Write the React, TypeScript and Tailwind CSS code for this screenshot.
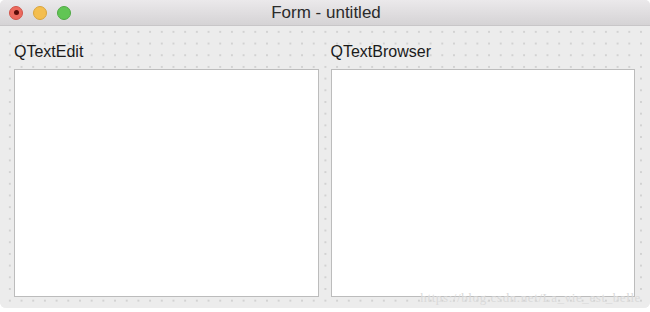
import React from 'react';

const TrafficLight = ({ color, border, dot }: { color: string; border: string; dot?: boolean }) => (
    <div className={`w-[14px] h-[14px] rounded-full border flex items-center justify-center ${color} ${border}`}>
        {dot && <div className="w-[5px] h-[5px] rounded-full bg-[#5a0d0a]" />}
    </div>
);

const Panel = ({ label }: { label: string }) => (
    <div className="flex flex-col flex-1">
        <div className="h-[43px] flex items-center text-[16px] text-[#1a1a1a] leading-none pt-[9px]">{label}</div>
        <div className="h-[228px] bg-white border border-[#bcbcbc]" />
    </div>
);

export default function App() {
    return (
        <div className="w-[650px] h-[312px] bg-white font-['Helvetica','Liberation_Sans',sans-serif]">
            <div className="w-[650px] h-[308px] rounded-b-[6px] rounded-t-[5px] overflow-hidden flex flex-col bg-[#ececec]">
                {/* title bar */}
                <div className="relative h-[26px] flex items-center bg-gradient-to-b from-[#ebe9eb] to-[#d5d3d5] border-b border-[#c8c6c8]">
                    <div className="flex items-center gap-[10px] pl-[9px]">
                        <TrafficLight color="bg-[#ec6a5e]" border="border-[#d2544a]" dot />
                        <TrafficLight color="bg-[#f4be4f]" border="border-[#d9a43c]" />
                        <TrafficLight color="bg-[#61c554]" border="border-[#4fa944]" />
                    </div>
                    <div className="absolute inset-0 flex items-center justify-center text-[17px] text-[#2b2b2b] pointer-events-none pl-[2px]">
                        Form - untitled
                    </div>
                </div>
                {/* form canvas */}
                <div className="relative flex-1 bg-[#ececec] bg-[radial-gradient(circle,#d2d2d2_0.7px,transparent_1.1px)] bg-[size:11.7px_11.7px] bg-[position:4px_0px]">
                    <div className="flex gap-[12px] px-[14px] pr-[15px]">
                        <Panel label="QTextEdit" />
                        <Panel label="QTextBrowser" />
                    </div>
                    <div className="absolute right-[9px] bottom-[1px] text-[13px] text-[#dadada] font-['Liberation_Serif',serif] tracking-[0.6px]">
                        https://blog.csdn.net/La_vie_est_belle
                    </div>
                </div>
            </div>
        </div>
    );
}
